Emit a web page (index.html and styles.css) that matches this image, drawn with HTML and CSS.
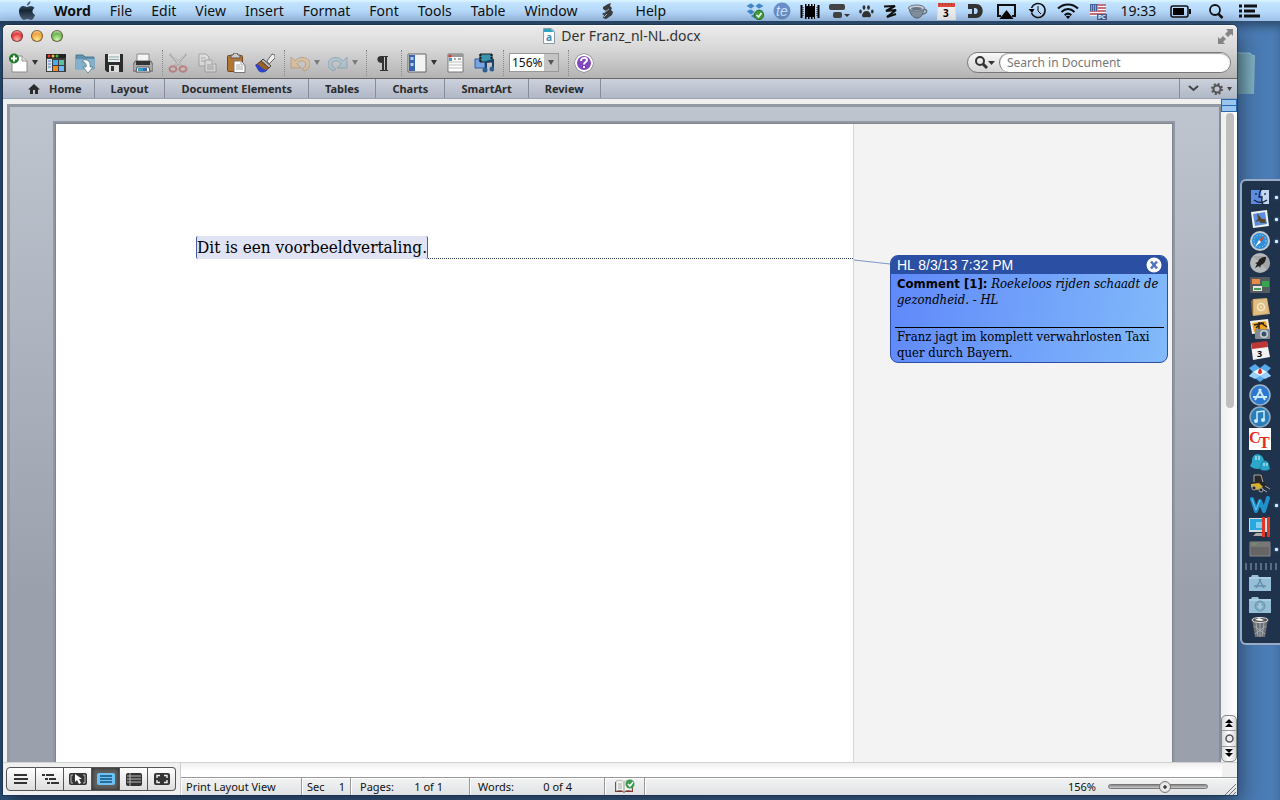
FILE: index.html
```html
<!DOCTYPE html>
<html lang="en">
<head>
    <meta charset="UTF-8">
    <meta name="viewport" content="width=device-width, initial-scale=1.0">
    <title>Der Franz_nl-NL.docx</title>
    <link rel="stylesheet" href="styles.css">
</head>
<body>
    <!-- Menu bar -->
    <header class="menubar">
        <nav class="menus">
            <svg class="apple" width="16" height="20" viewBox="0 0 16 20"><defs><linearGradient id="ap" x2="0" y2="1"><stop stop-color="#587083"/><stop offset=".5" stop-color="#172735"/><stop offset="1" stop-color="#50647c"/></linearGradient></defs><path fill="url(#ap)" d="M8 6c1 0 2-1 4-1 1.500 0 3 1 3.500 2-3 2-2.500 5.500.500 7-1 3-2.500 5-4 5-1.500 0-2-1-3.500-1S6 19 5 19c-2 0-5-4.500-5-8.500C0 7 2 5 4.500 5 6 5 7 6 8 6zM8 4.500C8 2.500 9.500.500 11.500 0c.200 2-1.500 4.500-3.500 4.500z"/></svg>
            <button class="menu app-name">Word</button>
            <button class="menu">File</button>
            <button class="menu">Edit</button>
            <button class="menu">View</button>
            <button class="menu">Insert</button>
            <button class="menu">Format</button>
            <button class="menu">Font</button>
            <button class="menu">Tools</button>
            <button class="menu">Table</button>
            <button class="menu">Window</button>
            <button class="menu script-menu" aria-label="Scripts"><svg width="14" height="18" viewBox="0 0 14 18"><path fill="#3d3d3d" d="M3 5l5-3 3-1-1 3 2 2-1 2 2 2-1 3-6 4-3-1 1-3-2-1 4-3-3-2z"/><path d="M4 11l5-4M4 15l3-3" stroke="#9cc0e6"/></svg></button>
            <button class="menu">Help</button>
        </nav>
        <div class="extras">
            <svg width="18" height="18" viewBox="0 0 18 18"><path fill="#3f87c5" stroke="#d8efff" stroke-width=".5" d="M5 1l4 3-4 3-5-3zM13 1l5 3-5 3-4-3zM0 9l5-2 4 3-4 3zM18 9l-5-2-4 3 4 3zM9 11l4 3-4 3-5-3z"/><circle cx="13" cy="13" r="4.700" fill="#43a03d" stroke="#28762a"/><path d="M10.500 13l2 2 3-4" fill="none" stroke="#fff" stroke-width="1.600"/></svg>
            <svg width="18" height="18" viewBox="0 0 18 18"><circle cx="9" cy="9" r="8.500" fill="#6a8fc6"/><text x="3" y="14" class="te">te</text></svg>
            <svg width="20" height="18" viewBox="0 0 20 18"><path d="M5 4h10v11H5z"/><path d="M1.500 3v13M18.500 3v13" stroke="#000" stroke-width="2"/><path d="M3 5v9M17 5v9" stroke="#111" stroke-dasharray="1 1"/><path d="M5 3.500h10M5 15.500h10" stroke="#000" stroke-width="3" stroke-dasharray="1.500 1.500"/></svg>
            <svg width="21" height="18" viewBox="0 0 21 18"><rect y="2" width="16" height="6" rx="2" fill="#444"/><rect x="4" y="10" width="9" height="6" rx="2" fill="#444"/><path d="M15 12h6l-3 3z" fill="#333"/></svg>
            <svg width="15" height="18" viewBox="0 0 15 18" fill="#333"><path d="M3 14c0-3 2-5 4.500-5s4.500 2 4.500 5c-1 2-2.500 1-4.500 1s-3.500 1-4.500-1z"/><ellipse cx="1.500" cy="9.500" rx="1.300" ry="2"/><ellipse cx="5" cy="5.500" rx="1.400" ry="2.300"/><ellipse cx="9.500" cy="5.500" rx="1.400" ry="2.300"/><ellipse cx="13.300" cy="9.500" rx="1.300" ry="2"/></svg>
            <svg width="16" height="18" viewBox="0 0 16 18"><path d="M1 4.500L12 4 3 9l10-1-9 7" fill="none" stroke="#111" stroke-width="2.200" stroke-linejoin="bevel"/><path d="M4 15l9-3" stroke="#111" stroke-width="2"/></svg>
            <svg width="20" height="18" viewBox="0 0 20 18"><path d="M1 6c1 6 4 10 8 10s6-3 7-10z" fill="#84929f" stroke="#56646f"/><path d="M15 8c5-2 5 4-1 4" fill="none" stroke="#65717e" stroke-width="1.500"/><ellipse cx="8.500" cy="6" rx="8" ry="3" fill="#c8d3dc" stroke="#65717e"/><ellipse cx="8.500" cy="6.500" rx="5.500" ry="1.600" fill="#687784"/></svg>
            <svg width="19" height="18" viewBox="0 0 19 18"><path d="M1 3h17l1 15H0z" fill="#eee"/><path d="M1 1h17v4H1z" fill="#d84b3d"/><path d="M2 2h15" stroke="#8c2620" stroke-dasharray="1 2"/><text x="6" y="15" class="cal-num">3</text></svg>
            <svg width="20" height="18" viewBox="0 0 20 18"><path fill="#333" fill-rule="evenodd" d="M3 2h8c9 0 9 14 0 14H3v-4h4V7H3zM9 6v6c5 1 5-7 0-6z"/></svg>
            <svg width="24" height="18" viewBox="0 0 24 18"><path d="M7 14H4V3h17v11h-3" fill="none" stroke="#111" stroke-width="2"/><path d="M12.500 8l7 9h-14z"/></svg>
            <svg width="20" height="18" viewBox="0 0 20 18"><path d="M4.500 11a7 7 0 1 0 0-5" fill="none" stroke="#111" stroke-width="1.600"/><path d="M1.500 7h6L5 11z"/><path d="M11 4v5l3 3" fill="none" stroke="#111"/></svg>
            <svg width="24" height="18" viewBox="0 0 24 18"><g fill="none" stroke="#111" stroke-width="2"><path d="M2 6.500C7.500 1 16.500 1 22 6.500M5.500 10c4-4 9-4 13 0M8.700 13.200c2-2 4.500-2 6.600 0"/></g><path d="M9.800 14.500c1-1 3.500-1 4.500 0L12 17z"/></svg>
            <svg width="19" height="18" viewBox="0 0 19 18"><path d="M1 2h16v12H1z" fill="#fff"/><path d="M1 3h16M1 6h16M1 9h16M1 12h16" stroke="#ba4454" stroke-width="1.500"/><path d="M1 2h8v7H1z" fill="#47629c"/><path d="M2 4h7M2 6h7M2 8h7" stroke="#dce6ff" stroke-dasharray="1 1"/><path d="M8 12h10v6H8z" fill="#506090"/><text x="9" y="17" class="pc">PC</text></svg>
            <time class="clock">19:33</time>
            <svg width="24" height="18" viewBox="0 0 24 18"><rect x="2" y="4" width="17" height="11" rx="2" fill="none" stroke="#111" stroke-width="1.500"/><path d="M4 6h11v7H4z"/><path d="M21 7v5" stroke="#111" stroke-width="2"/></svg>
            <svg width="28" height="18" viewBox="0 0 28 18"><circle cx="13" cy="8" r="5" fill="none" stroke="#111" stroke-width="1.800"/><path d="M16.500 12l4 4" stroke="#111" stroke-width="2.500"/></svg>
            <svg width="22" height="18" viewBox="0 0 22 18" stroke="#111" stroke-width="3"><path d="M0 4h3M5 4h13M0 9h3M5 9h11M0 14h3M5 14h16"/></svg>
        </div>
    </header>

    <main class="desktop">
        <svg class="desk-folder" width="44" height="44" viewBox="0 0 44 44"><defs><linearGradient id="fo"><stop stop-color="#417084"/><stop offset="1" stop-color="#83b3c5"/></linearGradient></defs><path d="M0 1h38l2 2 3 1-1 38H0z" fill="url(#fo)"/><path d="M0 1h38l2 2 3 1" fill="none" stroke="#8dbdd0"/></svg>

        <section class="window">
            <div class="titlebar">
                <div class="lights">
                    <button class="light red" aria-label="Close"></button>
                    <button class="light amber" aria-label="Minimize"></button>
                    <button class="light green" aria-label="Zoom"></button>
                </div>
                <h1 class="title">
                    <svg width="12" height="16" viewBox="0 0 12 16"><path d="M.5.500h8l3 3v12H.5z" fill="#fff" stroke="#8c9da5"/><path d="M1 1h7l3 3H1z" fill="#2fa3bd"/><text x="3" y="13" class="doc-a">a</text></svg>
                    Der Franz_nl-NL.docx
                </h1>
                <button class="fullscreen" aria-label="Full screen"><svg width="15" height="15" viewBox="0 0 15 15" fill="#858585"><path d="M8 0h7v7l-2-2-3 3-3-3 3-3zM0 8l2 2 3-3 3 3-3 3 2 2H0z"/></svg></button>
            </div>

            <div class="toolbar">
                <div class="split">
                    <button class="tool" aria-label="New"><svg width="20" height="20" viewBox="0 0 20 20"><path d="M4 3h10l5 5v11H4z" fill="#fff" stroke="#8a8a8a"/><path d="M14 3v5h5" fill="#ddd" stroke="#999"/><circle cx="6" cy="5.500" r="5" fill="#1f7c29"/><path d="M3 5.500h6M6 2.500v6" stroke="#fff" stroke-width="2"/></svg></button>
                    <svg width="6" height="5" viewBox="0 0 6 5"><path d="M0 0h6L3 5z" fill="#333"/></svg>
                </div>
                <button class="tool" aria-label="Gallery"><svg width="20" height="20" viewBox="0 0 20 20"><path d="M0 1h20v18H0z" fill="#3d3d3d"/><path d="M0 1h20v4H0z" fill="#222"/><path d="M1 6h5v12H1z" fill="#d6e4f5"/><path d="M2 8h3M2 11h3M2 14h3" stroke="#547caa"/><path d="M7 7h5v5H7z" fill="#4aacf0"/><path d="M13 7h5v5h-5z" fill="#57c1a3"/><path d="M7 13h5v5H7z" fill="#f48a25"/><path d="M13 13h5v5h-5z" fill="#6cb8ff"/><circle cx="3" cy="3" r="1.500" fill="#e33"/><circle cx="7" cy="3" r="1.500" fill="#eb3"/><circle cx="11" cy="3" r="1.500" fill="#4b4"/></svg></button>
                <button class="tool" aria-label="Open"><svg width="20" height="20" viewBox="0 0 20 20"><path d="M1 2h7l2 2h9v12H1z" fill="#5e91af" stroke="#4b7893"/><path d="M0 6h20l-1 11H1z" fill="#83b1ca"/><path d="M8 7c5-1 8 2 7 7h3l-5 6-5-6h3c1-3-1-5-3-5z" fill="#fff" stroke="#4a6d82" stroke-width=".7"/></svg></button>
                <button class="tool" aria-label="Save"><svg width="20" height="20" viewBox="0 0 20 20"><path d="M1 1h18v18H3l-2-2z" fill="#2c2c2e"/><path d="M4 1h12v8H4z" fill="#eee"/><path d="M5 4h10M5 6.500h10" stroke="#8aa"/><path d="M5 12h10v7H5z" fill="#ddd"/><path d="M7 13h3v5H7z" fill="#333"/></svg></button>
                <button class="tool" aria-label="Print"><svg width="20" height="20" viewBox="0 0 20 20"><path d="M4 1h12v9H4z" fill="#f5f5f5" stroke="#888"/><path d="M2 8h16l2 4v6H0v-6z" fill="#aaa" stroke="#666"/><path d="M3 8h14v4H3z" fill="#333"/><path d="M4 14h12l1 5H3z" fill="#fff" stroke="#555"/><path d="M5 15h5v3H5z" fill="#2e9ecb"/><path d="M10 15h4v3h-4z" fill="#346bb0"/></svg></button>
                <span class="sep"></span>
                <button class="tool dim" aria-label="Cut"><svg width="20" height="20" viewBox="0 0 20 20"><path d="M2 1l12 13M18 1L6 14" stroke="#777" stroke-width="2.400"/><path d="M3 1l10 12M17 1L7 13" stroke="#eee"/><ellipse cx="5" cy="16" rx="3.500" ry="2.700" fill="none" stroke="#b33c3c" stroke-width="2"/><ellipse cx="15" cy="16" rx="3.500" ry="2.700" fill="none" stroke="#b33c3c" stroke-width="2"/></svg></button>
                <button class="tool dim" aria-label="Copy"><svg width="20" height="20" viewBox="0 0 20 20" fill="#eee" stroke="#777"><path d="M2 1h7l3 3v9H2z"/><path d="M8 7h7l4 4v8H8z"/><path d="M4 5h4M4 8h4M10 12h6M10 14h7M10 16h7M15 7v4h4"/></svg></button>
                <button class="tool" aria-label="Paste"><svg width="20" height="20" viewBox="0 0 20 20"><rect x="1.500" y="2.500" width="15" height="16" rx="1" fill="#b47532" stroke="#784618"/><path d="M5 2h2l1-2h3l1 2h2v3H5z" fill="#ccc" stroke="#555"/><path d="M8 8h7l4 4v7.500H8z" fill="#fff" stroke="#777"/><path d="M10 12h4M10 14h7M10 16h7M15 8v4h4" fill="none" stroke="#aaa"/></svg></button>
                <button class="tool" aria-label="Format painter"><svg width="20" height="20" viewBox="0 0 20 20"><path d="M12 8l5-7 3 1v3l-6 6z" fill="#eee" stroke="#666"/><path d="M8 6l8 7-2 2-8-7z" fill="#bbb" stroke="#444"/><path d="M6 8l8 7-5 4-8-7z" fill="#9b612a" stroke="#60401d"/><path d="M0 12l2-1 8 6 3-1c-3 5-9 4-10 1z" fill="#2c42c9"/></svg></button>
                <span class="sep"></span>
                <div class="split dim">
                    <button class="tool" aria-label="Undo"><svg width="20" height="20" viewBox="0 0 20 20"><path d="M1 4l4 4c5-6 15-4 15 3 0 4-3 6-6 7l-2-2c6-3 4-9-1-8-2 0-3 1-4 3l4 4H1z" fill="#efb773" stroke="#a1764a"/></svg></button>
                    <svg width="6" height="5" viewBox="0 0 6 5"><path d="M0 0h6L3 5z" fill="#222"/></svg>
                </div>
                <div class="split dim">
                    <button class="tool" aria-label="Redo"><svg width="20" height="20" viewBox="0 0 20 20"><path d="M19 4l-4 4C10 2 0 4 0 11c0 4 3 6 6 7l2-2c-6-3-4-9 1-8 2 0 3 1 4 3l-4 4h10z" fill="#91bfd4" stroke="#56849a"/></svg></button>
                    <svg width="6" height="5" viewBox="0 0 6 5"><path d="M0 0h6L3 5z" fill="#222"/></svg>
                </div>
                <span class="sep"></span>
                <button class="tool" aria-label="Show formatting"><svg width="20" height="20" viewBox="0 0 20 20"><path d="M16 3H9c-5 0-5 7 1 7v7H8v1h4V4h1v13h-1v1h4v-1h-1V4h1z" fill="#333"/></svg></button>
                <span class="sep"></span>
                <div class="split">
                    <button class="tool" aria-label="Sidebar"><svg width="20" height="20" viewBox="0 0 20 20"><path d="M1 1h18v18H1z" fill="#f3f3f3" stroke="#666"/><path d="M2 2h6v16H2z" fill="#3c63ad"/><path d="M3.500 4h3v3h-3zM3.500 10h3v3h-3z" fill="#b6ceee"/></svg></button>
                    <svg width="6" height="5" viewBox="0 0 6 5"><path d="M0 0h6L3 5z" fill="#333"/></svg>
                </div>
                <button class="tool" aria-label="Toolbox"><svg width="20" height="20" viewBox="0 0 20 20"><path d="M3 1h15v18H3z" fill="#fff" stroke="#777"/><path d="M3 1h15v3H3z" fill="#999"/><path d="M3 9h15M3 12h15M3 15h15" stroke="#bbb"/><path d="M4 5h3v3H4z" fill="#4899d4"/><path d="M9 6h2M13 6h3" stroke="#555"/><circle cx="5" cy="3" r="1.500" fill="#d33"/></svg></button>
                <button class="tool" aria-label="Media"><svg width="20" height="20" viewBox="0 0 20 20"><path d="M1 6h10v9H1z" fill="#77a5e1" stroke="#345b9f"/><path d="M6 1h12v8H6z" fill="#3994ad" stroke="#222"/><path d="M6.500 1v8M17.500 1v8" stroke="#222" stroke-width="2" stroke-dasharray="2 1"/><path d="M12 18V9l7-2v9" fill="none" stroke="#1d4269" stroke-width="2"/><circle cx="11" cy="17" r="2.500" fill="#285f98"/><circle cx="18" cy="16" r="2.500" fill="#285f98"/></svg></button>
                <span class="sep"></span>
                <select class="zoom" aria-label="Zoom"><option>156%</option></select>
                <span class="sep"></span>
                <button class="tool" aria-label="Help"><svg width="20" height="20" viewBox="0 0 20 20"><circle cx="10" cy="10" r="9" fill="#8146c0" stroke="#666"/><circle cx="10" cy="10" r="8" fill="none" stroke="#fff" stroke-width="2"/><path d="M7 8c0-4 6-4 6-1 0 2-3 2-3 4.500M10 13v2" fill="none" stroke="#fff" stroke-width="2"/></svg></button>
                <label class="search">
                    <svg width="22" height="16" viewBox="0 0 22 16"><circle cx="6" cy="6" r="4" fill="none" stroke="#333" stroke-width="2"/><path d="M9 9l4 4" stroke="#333" stroke-width="3"/><path d="M14 6h7l-3.500 4z" fill="#333"/></svg>
                    <input type="text" placeholder="Search in Document" aria-label="Search in Document">
                </label>
            </div>

            <nav class="ribbon">
                <button class="tab home"><svg width="12" height="10" viewBox="0 0 12 10"><path d="M6 0l6 5.500h-2V10H7V6H5v4H2V5.500H0z" fill="#2b2b2b"/></svg>Home</button>
                <button class="tab">Layout</button>
                <button class="tab">Document Elements</button>
                <button class="tab">Tables</button>
                <button class="tab">Charts</button>
                <button class="tab">SmartArt</button>
                <button class="tab">Review</button>
                <div class="ribbon-tools">
                    <button class="tool" aria-label="Collapse ribbon"><svg width="11" height="7" viewBox="0 0 11 7"><path d="M1 1l4.500 4L10 1" fill="none" stroke="#444" stroke-width="2"/></svg></button>
                    <button class="tool" aria-label="Ribbon options"><svg width="21" height="12" viewBox="0 0 21 12"><circle cx="6" cy="6" r="3.500" fill="none" stroke="#555" stroke-width="2"/><circle cx="6" cy="6" r="5" fill="none" stroke="#555" stroke-width="2" stroke-dasharray="2 1.930"/><path d="M16 4h5l-2.500 4z" fill="#444"/></svg></button>
                </div>
            </nav>

            <!-- Document area -->
            <div class="workspace">
                <div class="canvas">
                    <article class="page">
                        <div class="body-text">
                            <p class="line"><mark>Dit is een voorbeeldvertaling.</mark><span class="leader"></span></p>
                        </div>
                        <aside class="gutter">
                            <svg class="connector" width="36" height="10" viewBox="0 0 36 10"><path d="M0 5l36 4" stroke="#7d95c5"/></svg>
                            <div class="comment">
                                <div class="comment-head">
                                    <span>HL 8/3/13 7:32 PM</span>
                                    <button class="tool" aria-label="Delete comment"><svg width="16" height="16" viewBox="0 0 16 16"><circle cx="8" cy="8" r="7.500" fill="#fff"/><path d="M5 4.500l6 7M11 4.500l-6 7" stroke="#5276bd" stroke-width="2.600"/></svg></button>
                                </div>
                                <p class="note"><b>Comment [1]:</b> <i>Roekeloos rijden schaadt de gezondheid. - HL</i></p>
                                <p class="source">Franz jagt im komplett verwahrlosten Taxi quer durch Bayern.</p>
                            </div>
                        </aside>
                    </article>
                </div>
                <div class="vscroll">
                    <div class="splitter"></div>
                    <div class="track"><div class="thumb"></div></div>
                    <div class="browse">
                        <button aria-label="Previous page"><svg width="8" height="9" viewBox="0 0 8 9"><path d="M4 0l4 4H0zM4 4l4 4H0z"/></svg></button>
                        <button aria-label="Select browse object"><svg width="9" height="9" viewBox="0 0 9 9"><circle cx="4.500" cy="4.500" r="3.500" fill="#eee" stroke="#555" stroke-width="1.500"/></svg></button>
                        <button aria-label="Next page"><svg width="8" height="9" viewBox="0 0 8 9"><path d="M0 0h8L4 4zM0 4h8L4 8z"/></svg></button>
                    </div>
                </div>
            </div>

            <footer class="bottom">
                <div class="views">
                    <button class="view" aria-label="Draft"><svg width="18" height="14" viewBox="0 0 18 14" stroke="#333" stroke-width="2"><path d="M2 3h13M2 7h14M2 11h13"/></svg></button>
                    <button class="view" aria-label="Outline"><svg width="18" height="14" viewBox="0 0 18 14" stroke="#333" stroke-width="2"><path d="M1 3h3M5 3h8M4 7h3M8 7h7M6 11h3M10 11h8"/></svg></button>
                    <button class="view" aria-label="Publishing"><svg width="18" height="14" viewBox="0 0 18 14"><rect y="1" width="18" height="12" rx="2" fill="#333"/><path d="M4 3H2v8h2M14 3h2v8h-2" fill="none" stroke="#bbb"/><path d="M6 2v8l2-2 2 4 2-1-2-4h3z" fill="#fff"/></svg></button>
                    <button class="view on" aria-label="Print Layout"><svg width="18" height="14" viewBox="0 0 18 14"><rect y="1" width="18" height="12" rx="2" fill="#6bc2f3"/><path d="M3 4h12M3 7h12M3 10h12" stroke="#15527e" stroke-width="1.500"/></svg></button>
                    <button class="view" aria-label="Notebook"><svg width="16" height="14" viewBox="0 0 16 14"><rect y="1" width="16" height="13" rx="2" fill="#333"/><path d="M4 1v13M1 4h14M1 7h14M1 10h14" stroke="#bbb"/></svg></button>
                    <button class="view" aria-label="Full Screen"><svg width="16" height="14" viewBox="0 0 16 14"><rect y="1" width="16" height="12" rx="2" fill="#333"/><path d="M6 3.500H3V6M10 3.500h3V6M3 8v2.500h3M13 8v2.500h-3" fill="none" stroke="#eee" stroke-width="1.400"/></svg></button>
                </div>
                <div class="bottom-main">
                    <div class="hscroll"></div>
                    <div class="status">
                        <span class="cell mode">Print Layout View</span>
                        <span class="cell sec"><span>Sec</span><span>1</span></span>
                        <span class="cell pages"><span>Pages:</span><span>1 of 1</span></span>
                        <span class="cell words"><span>Words:</span><span>0 of 4</span></span>
                        <span class="cell proof"><svg width="20" height="15" viewBox="0 0 20 15"><path d="M0 3v10h8l1 1 1-1h8V3z" fill="#7a3026"/><path d="M1 2c3-1 6-1 8 1v10c-2-2-5-2-8-1zM9 3c2-2 5-2 8-1v10c-3-1-6-1-8 1z" fill="#f3f3ee" stroke="#999" stroke-width=".6"/><path d="M3 5h4M3 7h4M3 9h4" stroke="#aaa"/><circle cx="15" cy="5" r="4.500" fill="#399c4d"/><path d="M13 5l2 2 3-4" fill="none" stroke="#fff" stroke-width="1.500"/></svg></span>
                        <span class="cell rest">
                            <label for="zoomRange">156%</label>
                            <input type="range" id="zoomRange" min="0" max="100" value="58">
                            <svg class="grip" width="12" height="12" viewBox="0 0 12 12" stroke="#777"><path d="M1 12L12 1M5 12l7-7M9 12l3-3"/></svg>
                        </span>
                    </div>
                </div>
            </footer>
        </section>

        <!-- Dock -->
        <aside class="dock">
            <div class="dock-item running"><svg width="22" height="22" viewBox="0 0 22 22"><path d="M2 4h18v14H2z" fill="#5c8bdf"/><path d="M12 4h8v14h-7z" fill="#c3d7f2"/><path d="M13 2c-3 4-3 6-3 9h3c-1 4 0 6 1 8M5 14c4 3 9 3 13 0M7 7v2M16 7v2" fill="none" stroke="#17223b" stroke-width="1.300"/></svg></div>
            <div class="dock-item running"><svg width="22" height="22" viewBox="0 0 22 22"><path d="M2 4l16-2 2 16-16 2z" fill="#f1f1f1"/><path d="M4 6l12-2 2 12-12 2z" fill="#5c8ee0"/><path d="M8 5l5 6 3 0 1 4-5 0-2-2-4 1 3-3z" fill="#59452d"/></svg></div>
            <div class="dock-item running"><svg width="22" height="22" viewBox="0 0 22 22"><circle cx="11" cy="11" r="10" fill="#c5cbd0"/><circle cx="11" cy="11" r="8" fill="#2d8fd8"/><circle cx="11" cy="11" r="6" fill="none" stroke="#bce5fc" stroke-dasharray="1 2"/><path d="M16 5l-4 7-2-2z" fill="#e44324"/><path d="M6 17l4-7 2 2z" fill="#fff"/></svg></div>
            <div class="dock-item"><svg width="22" height="22" viewBox="0 0 22 22"><circle cx="11" cy="11" r="10" fill="#b5b8bb"/><path d="M4 4l14 14A10 10 0 0 0 18 4z" fill="#888" opacity=".4"/><path d="M17 5c-5 0-7 2-8 5l-3 1 2 1-2 4 4-2 1 2 1-3c3-1 5-4 5-8z" fill="#222"/></svg></div>
            <div class="dock-item"><svg width="22" height="22" viewBox="0 0 22 22"><rect x="1" y="3" width="20" height="16" rx="1" fill="#555b60"/><path d="M3 5h8v5H3z" fill="#e88a4a"/><path d="M13 7h7v6h-7z" fill="#3ba450"/><path d="M4 12h9v5H4z" fill="#e6e6e6"/><path d="M5 15h7" stroke="#4b9b55" stroke-width="2"/></svg></div>
            <div class="dock-item"><svg width="22" height="22" viewBox="0 0 22 22"><path d="M4 3l14-1 3 16-17 2z" fill="#d2ac6d"/><path d="M2 5l2-2v17l-1-2z" fill="#8d6638"/><path d="M5 4l13-1 1 14-14 2z" fill="#dfbf86"/><circle cx="12" cy="11" r="3.500" fill="none" stroke="#f6e7c7" stroke-width="1.500"/><circle cx="12" cy="11" r="1" fill="#f6e7c7"/></svg></div>
            <div class="dock-item"><svg width="22" height="22" viewBox="0 0 22 22"><path d="M1 3l18-2 2 13-18 2z" fill="#eee"/><path d="M3 5l14-2 2 9-14 2z" fill="#f1a11c"/><path d="M10 4v9M5 7l10-2M7 10l5-5 6 4" stroke="#2c2415" stroke-width="1.500" fill="none"/><rect x="6" y="11" width="15" height="10" rx="1" fill="#848b92"/><circle cx="15" cy="16" r="4" fill="#ccd3d8"/><circle cx="15" cy="16" r="2.500" fill="#39516a"/></svg></div>
            <div class="dock-item"><svg width="22" height="22" viewBox="0 0 22 22"><path d="M2 4l16-2 3 15-17 3z" fill="#f2f2f2"/><path d="M2 3l16-2 1 6L3 9z" fill="#bc3736"/><text x="8" y="17" class="dock-cal">3</text></svg></div>
            <div class="dock-item"><svg width="22" height="22" viewBox="0 0 22 22"><path d="M6 2l5 4 5-4 6 4-4 4 4 4-6 2-5 4-5-4-6-2 4-4-4-4z" fill="#55a9eb"/><path d="M11 6l7 4-7 4-7-4z" fill="#e9f5ff"/><path d="M0 14l4-4 7 4-5 3zM22 14l-4-4-7 4 5 3z" fill="#99d0fa"/><path d="M11 6c3 3 2 6 0 6s-3-2 0-6z" fill="#da2a22"/></svg></div>
            <div class="dock-item"><svg width="22" height="22" viewBox="0 0 22 22"><circle cx="11" cy="11" r="10" fill="#2c78ce" stroke="#9eb4c9" stroke-width="1.500"/><path d="M6 16l6-11M10 5l6 11M4 13h14" stroke="#cceaff" stroke-width="2"/></svg></div>
            <div class="dock-item"><svg width="22" height="22" viewBox="0 0 22 22"><circle cx="11" cy="11" r="10" fill="#2b7dba" stroke="#94aabb" stroke-width="1.500"/><path d="M8 15V6l7-1v9" fill="none" stroke="#c9ecff" stroke-width="1.500"/><circle cx="7" cy="15" r="2" fill="#c9ecff"/><circle cx="14" cy="14" r="2" fill="#c9ecff"/></svg></div>
            <div class="dock-item"><svg width="22" height="22" viewBox="0 0 22 22"><path d="M0 0h22v22H0z" fill="#fff"/><text x="0" y="15" class="ct">C</text><text x="10" y="20" class="ct">T</text></svg></div>
            <div class="dock-item"><svg width="22" height="22" viewBox="0 0 22 22" fill="#2ca6ca"><path d="M3 12c-1-10 11-10 12-1l2 5c-5 4-12 4-16 0z"/><path d="M12 17c-1-8 8-8 8-1l1 3c-3 2-8 2-10 0z" stroke="#1a6e91" stroke-width=".7"/><path d="M7 6v4M10 6v4M15 13v3M18 13v3" stroke="#dff"/></svg></div>
            <div class="dock-item"><svg width="22" height="22" viewBox="0 0 22 22"><path d="M4 2h9l3 9 4 5-2 1-5-3-9 2-3-4 4-2z" fill="#292929"/><path d="M2 12l8-1 4 4-6 3-6-3z" fill="#d8b22b"/><path d="M5 3h7l2 7M5 3v7M13 17l5 3M16 14l5 3" fill="none" stroke="#aaa"/><circle cx="5" cy="16" r="2" fill="#222" stroke="#aaa"/><circle cx="12" cy="18" r="2" fill="#222" stroke="#aaa"/></svg></div>
            <div class="dock-item running"><svg width="22" height="22" viewBox="0 0 22 22"><path d="M3 5l4 12 4-10 4 10 4-13" fill="none" stroke="#2191cb" stroke-width="4" stroke-linejoin="round" stroke-linecap="round"/><path d="M3 5l4 11 4-10" fill="none" stroke="#67c7ef"/></svg></div>
            <div class="dock-item"><svg width="22" height="22" viewBox="0 0 22 22"><path d="M0 2h19v14H0z" fill="#d8dde0"/><path d="M1 3h15v11H1z" fill="#2aa8df"/><path d="M7 6h7v6H7z" fill="#7bd0f4"/><path d="M7 17h6l2 3H4z" fill="#aaa"/><path d="M14.500 1v20M19.500 1v20" stroke="#df3627" stroke-width="3"/></svg></div>
            <div class="dock-item running"><svg width="22" height="22" viewBox="0 0 22 22"><path d="M1 4h20v14H1z" fill="#656565" stroke="#888"/><path d="M1 4h20v5H1z" fill="#777"/><path d="M3 6h5" stroke="#79a85b"/></svg></div>
            <div class="dock-sep"></div>
            <div class="dock-item"><svg width="22" height="22" viewBox="0 0 22 22"><path d="M0 5h2l1-2h6l1 2h12v14H0z" fill="#95bed7"/><path d="M0 6h22" stroke="#c1ddea"/><path d="M7 16l5-9M10 7l5 9M5 14h12" stroke="#658fa9" stroke-width="1.500"/></svg></div>
            <div class="dock-item"><svg width="22" height="22" viewBox="0 0 22 22"><path d="M0 5h2l1-2h6l1 2h12v14H0z" fill="#95bed7"/><path d="M0 6h22" stroke="#c1ddea"/><circle cx="11" cy="12" r="5" fill="#7ba7c0" stroke="#6a95af"/><path d="M9.500 9h3v3h2L11 16l-3.500-4h2z" fill="#a1c7db"/></svg></div>
            <div class="dock-item"><svg width="22" height="22" viewBox="0 0 22 22"><path d="M3 3h16l-3 18H6z" fill="#6c7074"/><path d="M7 7l2 13M11 7v14M15 7l-2 13M5 10l11 8M17 10L6 18" stroke="#b4b8bb" stroke-width=".8"/><ellipse cx="11" cy="4" rx="8" ry="2.500" fill="#555" stroke="#ddd"/><path d="M6 4l4-2 5 2-3 1z" fill="#fff"/></svg></div>
        </aside>
    </main>
</body>
</html>
```

FILE: styles.css
```css
* {
    box-sizing: border-box;
}

body {
    margin: 0;
    height: 100vh;
    display: flex;
    flex-direction: column;
    overflow: hidden;
    font-family: "Noto Sans", "Open Sans", sans-serif;
    font-size: 11px;
    color: #111;
}

button,
input,
select {
    font: inherit;
    color: inherit;
}

button {
    margin: 0;
    padding: 0;
    border: 0;
    background: none;
}

svg {
    display: block;
    flex: none;
}

p,
h1 {
    margin: 0;
}

/* Menu bar */
.menubar {
    flex: none;
    height: 21px;
    display: flex;
    justify-content: space-between;
    align-items: center;
    padding: 0 19px;
    background: linear-gradient(#dcf6ff 0, #c2e3ff 3px, #b9dcfd 50%, #9ec1e9);
    font-size: 14px;
    line-height: 20px;
}

.menus {
    display: flex;
    align-items: center;
    gap: 19px;
}

.app-name {
    font-weight: 700;
}

.script-menu {
    padding: 0 3px;
}

.extras {
    display: flex;
    align-items: center;
    gap: 9px;
}

.clock {
    width: 43px;
    text-align: center;
}

.te {
    font: italic 14px "Liberation Sans", sans-serif;
    fill: #c8e4ff;
}

.cal-num {
    font: bold 10px "Noto Sans", sans-serif;
}

.pc {
    font: bold 6px "Noto Sans", sans-serif;
    fill: #fff;
}

/* Desktop */
.desktop {
    position: relative;
    flex: 1;
    min-height: 0;
    display: flex;
    padding: 4px 43px 5px 3px;
    background: linear-gradient(90deg, #36608f, #4b7cb5);
    box-shadow: inset 0 8px 10px -3px rgba(0, 0, 0, 0.4);
}

.desk-folder {
    position: absolute;
    top: 31px;
    right: 24px;
}

.window {
    position: relative;
    flex: 1;
    min-width: 0;
    display: flex;
    flex-direction: column;
    border-radius: 5px 5px 0 0;
    background: #f0f0f0;
    box-shadow: 0 0 0 1px rgba(20, 40, 70, 0.5), 0 8px 24px rgba(0, 0, 0, 0.6);
}

.titlebar {
    flex: none;
    height: 22px;
    display: flex;
    align-items: center;
    justify-content: space-between;
    padding: 0 4px 0 8px;
    border-radius: 5px 5px 0 0;
    background: linear-gradient(#ececec, #d9d9d9);
    box-shadow: inset 0 1px #f8f8f8;
}

.lights {
    display: flex;
    gap: 8px;
}

.light {
    width: 12px;
    height: 12px;
    border-radius: 50%;
    border: 1px solid rgba(60, 30, 20, 0.6);
}

.red {
    background: radial-gradient(circle at 50% 85%, #ffb1aa, #e2393d 60%, #fbc7c5);
}

.amber {
    background: radial-gradient(circle at 50% 85%, #ffe794, #eda33c 60%, #fbe1b8);
}

.green {
    background: radial-gradient(circle at 50% 85%, #d0f7ac, #6eb555 60%, #d2efc4);
}

.title {
    display: flex;
    align-items: center;
    gap: 6px;
    font-size: 14px;
    font-weight: 400;
    line-height: 20px;
    color: #333;
}

.doc-a {
    font: bold 10px "Noto Sans", sans-serif;
    fill: #3a8db5;
}

.fullscreen {
    width: 52px;
    display: flex;
    justify-content: flex-end;
}

/* Standard toolbar */
.toolbar {
    flex: none;
    height: 32px;
    display: flex;
    align-items: center;
    gap: 9px;
    padding: 0 6px 0 5px;
    background: linear-gradient(#d9d9d9, #b3b3b3);
    border-bottom: 1px solid #666;
}

.split {
    display: flex;
    align-items: center;
    gap: 4px;
    margin-right: -1px;
}

.dim {
    opacity: 0.45;
}

.sep {
    flex: none;
    height: 26px;
    margin-right: -4px;
    border-left: 1px dotted #888;
}

.zoom {
    width: 50px;
    height: 19px;
    padding: 0 0 0 2px;
    appearance: none;
    border: 1px solid #999;
    border-radius: 0;
    font-size: 12px;
    background: url("data:image/svg+xml,%3Csvg xmlns='http://www.w3.org/2000/svg' width='14' height='17'%3E%3Cpath d='M0 0h14v17H0z' fill='%23c4c4c4'/%3E%3Cpath d='M4 6h6l-3 5z' fill='%23555'/%3E%3C/svg%3E") right center no-repeat #fff;
}

.search {
    width: 264px;
    height: 21px;
    margin-left: auto;
    display: flex;
    align-items: center;
    gap: 3px;
    padding-left: 6px;
    border: 1px solid #777;
    border-radius: 11px;
    background: linear-gradient(#f8f8f8, #d4d4d4);
}

.search input {
    flex: 1;
    min-width: 0;
    height: 19px;
    padding: 0 7px;
    border: 0;
    border-left: 1px solid #777;
    border-radius: 10px;
    background: #fff;
    font-size: 12px;
    box-shadow: inset 0 1px 1px #aaa;
}

.search input::placeholder {
    color: #777;
}

/* Ribbon tabs */
.ribbon {
    flex: none;
    height: 20px;
    display: flex;
    background: linear-gradient(#cdd2dc, #b0b7c6);
    border-bottom: 1px solid #9aa5b3;
}

.tab {
    display: flex;
    align-items: center;
    gap: 9px;
    padding: 0 16px;
    border-right: 1px solid #868d99;
    font-weight: 700;
    color: #2b2b2b;
}

.home {
    padding: 0 12px 0 25px;
}

.ribbon-tools {
    margin-left: auto;
    display: flex;
    align-items: center;
    gap: 12px;
    padding: 0 5px 0 8px;
    border-left: 1px solid #868d99;
}

/* Document */
.workspace {
    flex: 1;
    min-height: 0;
    display: flex;
    padding-left: 4px;
}

.canvas {
    flex: 1;
    min-width: 0;
    display: flex;
    margin-top: 5px;
    padding: 17px 49px 0 49px;
    background: linear-gradient(#bfc5cf, #9aa0ac 75%);
    box-shadow: inset 3px 3px #9299a3, inset -2px 0 #858d98;
}

.page {
    flex: 1;
    min-width: 0;
    display: flex;
    margin-top: 3px;
    background: #fff;
    box-shadow: 0 0 0 1px #7f8692, 0 0 0 3px #9298a3;
    clip-path: inset(-3px -3px 0 -3px);
}

.body-text {
    flex: 1;
    padding: 112px 0 0 140px;
}

.line {
    display: flex;
    align-items: flex-end;
    font: 17px/23px "DejaVu Serif Condensed", "DejaVu Serif", serif;
}

.line mark {
    background: #dfe3f3;
    color: #000;
    border: solid #4561a8;
    border-width: 0 1px;
    border-radius: 2px;
}

.leader {
    flex: 1;
    border-bottom: 1px dotted #333c66;
}

.gutter {
    flex: none;
    width: 319px;
    display: flex;
    align-items: flex-start;
    padding: 131px 4px 0 0;
    border-left: 1px solid #d8d8d8;
    background: #f3f3f3;
}

.comment {
    flex: 1;
    height: 108px;
    overflow: hidden;
    border: 1px solid #2b4fa3;
    border-radius: 8px;
    background: linear-gradient(100deg, #5f88fa, #82bafa);
    font: 13px/16px "DejaVu Serif Condensed", "DejaVu Serif", serif;
    color: #000;
}

.comment-head {
    height: 18px;
    display: flex;
    align-items: center;
    justify-content: space-between;
    padding: 0 5px 0 6px;
    background: #2b4fa3;
    color: #fff;
    font: 14px/18px "Liberation Sans", sans-serif;
}

.note {
    height: 54px;
    margin: 0 3px 0 4px;
    padding: 2px 0 0 2px;
    border-bottom: 1px solid #000;
}

.note b {
    font: bold 13px/16px "DejaVu Sans Condensed", "DejaVu Sans", sans-serif;
}

.source {
    padding: 1px 6px;
}

/* Vertical scroll bar */
.vscroll {
    width: 16px;
    display: flex;
    flex-direction: column;
    background: linear-gradient(90deg, #eee, #fff);
}

.splitter {
    height: 13px;
    border: 1px solid #2867b2;
    background: linear-gradient(#9ac5ef 5px, #2867b2 5px, #2867b2 6px, #9ac5ef 6px);
}

.track {
    flex: 1;
    padding: 1px 3px 0 5px;
}

.thumb {
    height: 49%;
    width: 8px;
    border-radius: 4px;
    background: #bfbfbf;
}

.browse {
    height: 47px;
    display: flex;
    flex-direction: column;
    border: 1px solid #888;
    border-radius: 5px;
    overflow: hidden;
    background: linear-gradient(90deg, #d8d8d8, #fff, #d8d8d8);
}

.browse button {
    flex: 1;
    display: flex;
    align-items: center;
    justify-content: center;
}

.browse button + button {
    border-top: 1px solid #999;
}

/* Views and status bar */
.bottom {
    flex: none;
    height: 33px;
    display: flex;
    border-top: 1px solid #d2d2d2;
}

.views {
    display: flex;
    padding: 4px 4px 4px 3px;
    border-right: 1px solid #ccc;
}

.view {
    width: 28px;
    height: 24px;
    display: flex;
    align-items: center;
    justify-content: center;
    border: solid #555;
    border-width: 1px 1px 1px 0;
    background: linear-gradient(#fff, #ddd);
}

.view:first-child {
    width: 30px;
    border-left-width: 1px;
    border-radius: 4px 0 0 4px;
}

.view:last-child {
    border-radius: 0 4px 4px 0;
}

.on {
    background: #606060;
    box-shadow: inset 0 0 4px #222;
}

.bottom-main {
    flex: 1;
    display: flex;
    flex-direction: column;
}

.hscroll {
    height: 14px;
    margin-right: 15px;
    background: linear-gradient(#efefef, #fff 60%);
}

.status {
    flex: 1;
    display: flex;
    border-top: 1px solid #999;
    background: linear-gradient(#f3f3f3, #dfe2e5);
}

.cell {
    display: flex;
    align-items: center;
    justify-content: space-between;
    padding: 0 5px;
    border-right: 1px solid #999;
    box-shadow: inset 1px 1px #fff;
}

.mode {
    width: 121px;
}

.sec {
    width: 49px;
}

.pages {
    width: 119px;
    padding: 0 26px 0 9px;
}

.words {
    width: 135px;
    padding: 0 32px 0 8px;
}

.proof {
    width: 40px;
    padding: 0 10px;
}

.rest {
    flex: 1;
    justify-content: flex-end;
    gap: 12px;
    padding: 0 1px 0 0;
    border: 0;
}

.rest input {
    appearance: none;
    width: 100px;
    height: 5px;
    margin: 0;
    border: 1px solid #777;
    border-radius: 3px;
    background: linear-gradient(#888, #ccc);
}

.rest input::-webkit-slider-thumb {
    appearance: none;
    width: 12px;
    height: 12px;
    border: 1px solid #777;
    border-radius: 50%;
    background: radial-gradient(#444 20%, #eee 30%, #ddd);
}

.grip {
    margin-left: 4px;
    align-self: flex-end;
}

/* Dock */
.dock {
    position: absolute;
    right: 0;
    top: 158px;
    width: 40px;
    padding: 5px 0 5px 7px;
    border: 2px solid #96adc5;
    border-right: 0;
    border-radius: 6px 0 0 6px;
    background: #20334d;
}

.dock-item {
    display: flex;
    align-items: center;
    gap: 4px;
}

.running::after {
    content: "";
    width: 3px;
    height: 3px;
    border-radius: 1px;
    background: #d8ebff;
    box-shadow: 0 0 2px #8fc5ff;
}

.dock-sep {
    height: 12px;
    margin: 0 2px 0 -4px;
    border: solid transparent;
    border-width: 3px 0 2px;
    background: repeating-linear-gradient(90deg, #5c6c82 0, #5c6c82 2px, transparent 2px, transparent 5px) padding-box;
}

.dock-cal {
    font: bold 9px "Noto Sans", sans-serif;
}

.ct {
    font: bold 16px "Liberation Serif", serif;
    fill: #e12d20;
}
```
